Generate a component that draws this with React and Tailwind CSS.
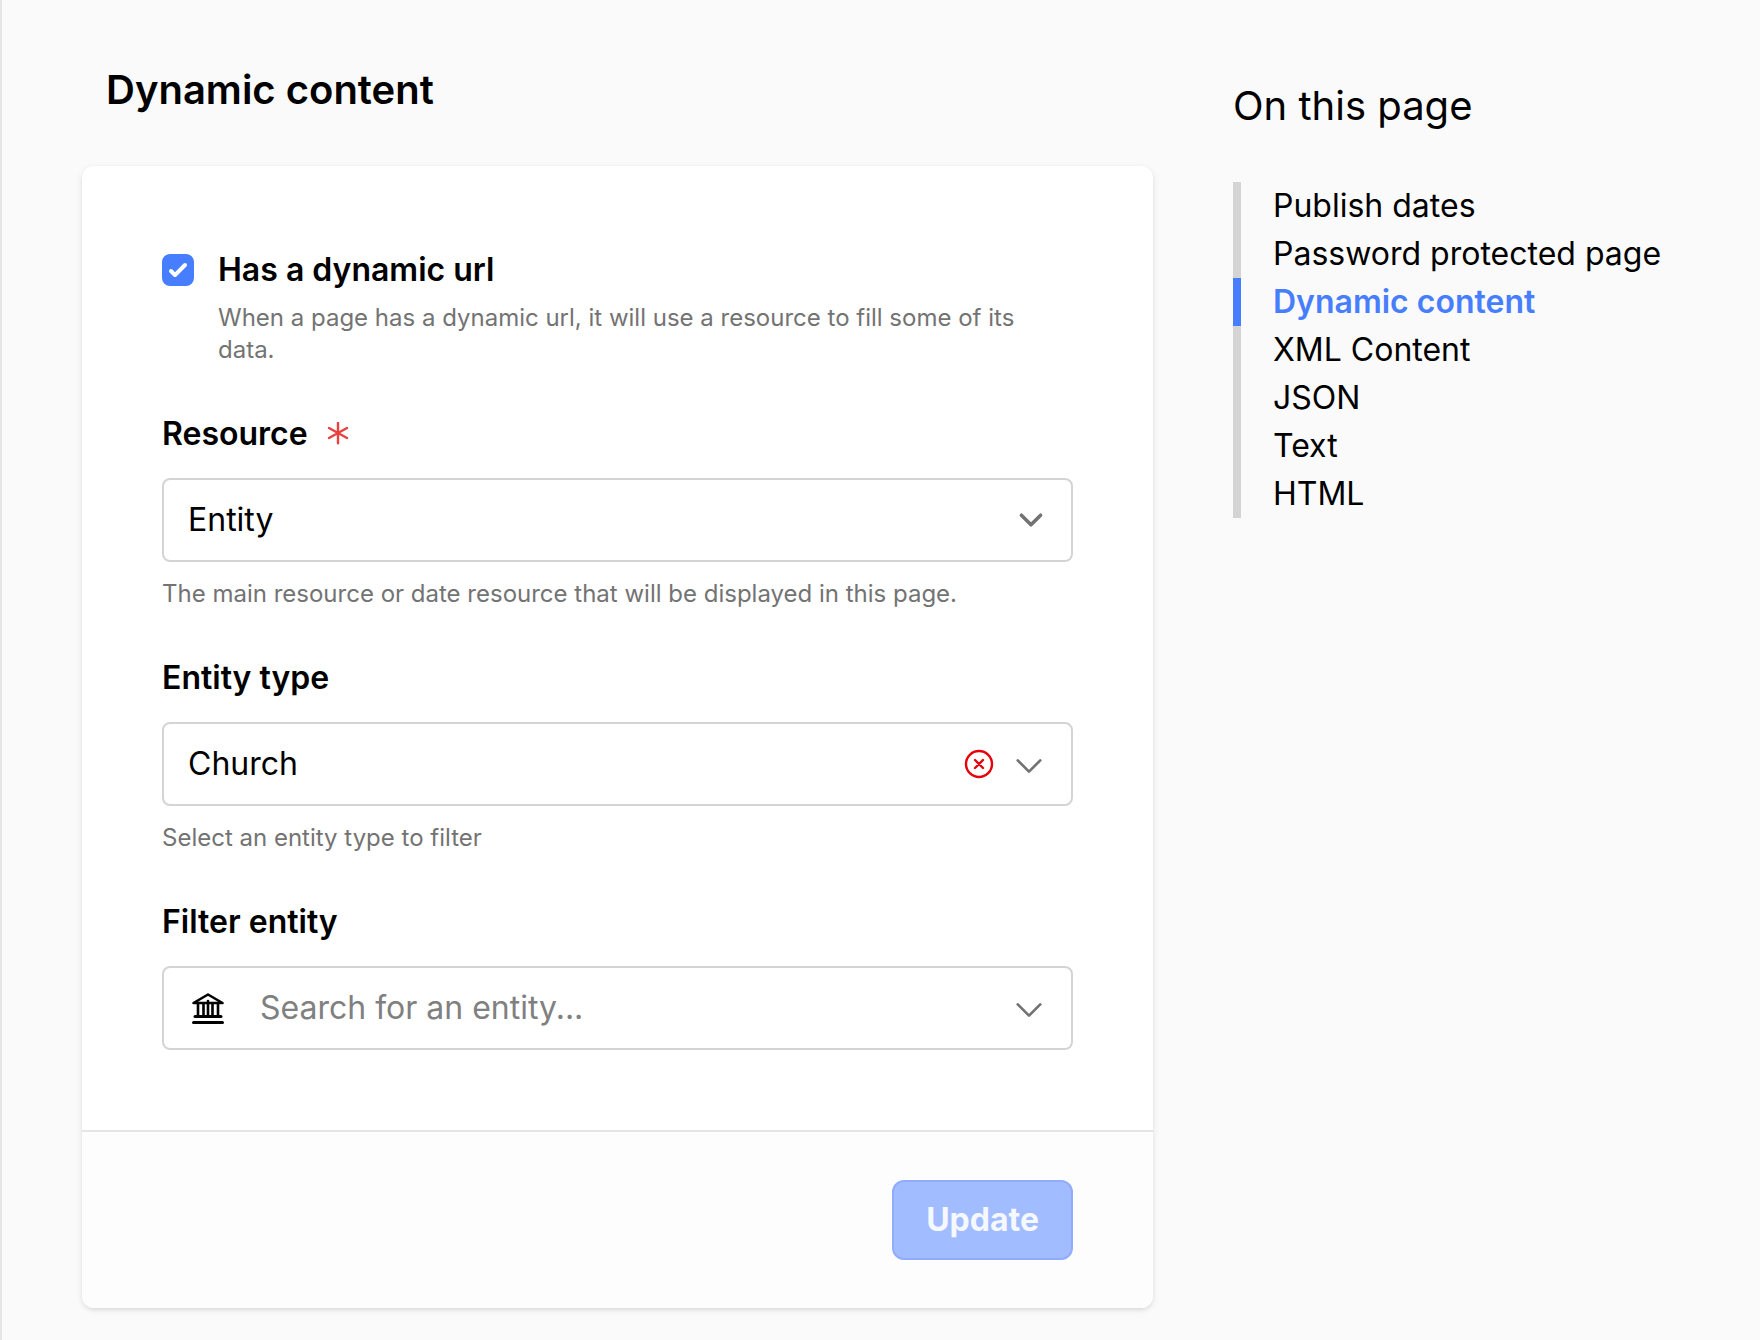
import { useState } from "react";
import { HiOutlineChevronDown } from "react-icons/hi2";

const sections = [
  "Publish dates",
  "Password protected page",
  "Dynamic content",
  "XML Content",
  "JSON",
  "Text",
  "HTML",
];

const fieldClass =
  "block h-[84px] w-full appearance-none rounded-lg border-2 border-neutral-300 bg-white text-[32px] leading-10 text-black";

const LibraryIcon = () => (
  <svg
    viewBox="0 0 40 40"
    fill="none"
    stroke="currentColor"
    strokeWidth="3"
    strokeLinecap="round"
    strokeLinejoin="round"
    className="pointer-events-none absolute inset-y-0 left-[26px] my-auto size-10"
  >
    <path d="M5.5 15L20 6.5 34.5 15z" strokeWidth="2.6" />
    <path d="M10 16v12M15.5 16v12M20 13v15M24.5 16v12M30 16v12" strokeWidth="2.6" />
    <path d="M7 28.5h26" />
    <path d="M5.5 34.5h29" />
  </svg>
);

const Field = ({ id, label, required, help, children }) => (
  <div className="mt-12">
    <div className="mb-6 flex items-center gap-[18px]">
      <label htmlFor={id} className="text-[32px] leading-10 font-semibold">
        {label}
      </label>
      {required && (
        <svg viewBox="0 0 24 24" className="size-6 text-[#e94040]" fill="none" stroke="currentColor" strokeWidth="2.4" strokeLinecap="round">
          <path d="M12 0.8v20.4M3 6l18 10M21 6L3 16" />
        </svg>
      )}
    </div>
    <div className="relative">{children}</div>
    {help && <p className="mt-4 text-2xl text-neutral-500">{help}</p>}
  </div>
);

const DynamicContentForm = () => {
  const [isDynamic, setIsDynamic] = useState(true);
  const [resource, setResource] = useState("Entity");
  const [entityType, setEntityType] = useState("Church");
  const [search, setSearch] = useState("");

  return (
    <form className="overflow-hidden rounded-xl bg-white shadow-[0_2px_6px_rgba(0,0,0,0.1),0_2px_4px_-2px_rgba(0,0,0,0.1)]">
      <div className="p-20">
        <div className="flex items-start gap-6">
          <div className="relative mt-2 size-8 shrink-0">
            <input
              id="dynamic-url"
              type="checkbox"
              checked={isDynamic}
              onChange={(e) => setIsDynamic(e.target.checked)}
              className="block size-8 appearance-none rounded-lg border-2 border-neutral-300 checked:border-[#477eff] checked:bg-[#477eff]"
            />
            {isDynamic && (
              <svg viewBox="0 0 16 16" fill="white" className="pointer-events-none absolute inset-0 size-8">
                <path d="M12.207 4.793a1 1 0 010 1.414l-5 5a1 1 0 01-1.414 0l-2-2a1 1 0 011.414-1.414L6.5 9.086l4.293-4.293a1 1 0 011.414 0z" />
              </svg>
            )}
          </div>
          <div>
            <label htmlFor="dynamic-url" className="block text-[32px] leading-12 font-semibold">
              Has a dynamic url
            </label>
            <p className="mt-2 text-2xl text-neutral-500">
              When a page has a dynamic url, it will use a resource to fill some of its data.
            </p>
          </div>
        </div>

        <Field
          id="resource"
          label="Resource"
          required
          help="The main resource or date resource that will be displayed in this page."
        >
          <select
            id="resource"
            value={resource}
            onChange={(e) => setResource(e.target.value)}
            className={`${fieldClass} pr-20 pl-6`}
          >
            <option>Entity</option>
            <option>Event</option>
          </select>
          <svg
            viewBox="0 0 20 20"
            fill="none"
            stroke="currentColor"
            strokeWidth="1.5"
            strokeLinecap="round"
            strokeLinejoin="round"
            className="pointer-events-none absolute inset-y-0 right-[18px] my-auto size-12 text-neutral-500"
          >
            <path d="M6 8l4 4 4-4" />
          </svg>
        </Field>

        <Field id="entity-type" label="Entity type" help="Select an entity type to filter">
          <select
            id="entity-type"
            value={entityType}
            onChange={(e) => setEntityType(e.target.value)}
            className={`${fieldClass} pr-32 pl-6`}
          >
            <option value=""></option>
            <option>Church</option>
          </select>
          <div className="pointer-events-none absolute inset-y-0 right-[26px] flex items-center gap-4">
            <button
              type="button"
              aria-label="Clear entity type"
              onClick={() => setEntityType("")}
              className="pointer-events-auto text-red-600"
            >
              <svg viewBox="0 0 32 32" fill="none" stroke="currentColor" strokeWidth="2.4" strokeLinecap="round" className="size-8">
                <circle cx="16" cy="16" r="13" />
                <path d="M12 12l8 8M20 12l-8 8" />
              </svg>
            </button>
            <HiOutlineChevronDown strokeWidth={1.8} className="mt-1 size-9 text-neutral-500" />
          </div>
        </Field>

        <Field id="filter-entity" label="Filter entity">
          <input
            id="filter-entity"
            type="text"
            value={search}
            onChange={(e) => setSearch(e.target.value)}
            placeholder="Search for an entity..."
            className={`${fieldClass} pr-20 pb-0.5 pl-24 placeholder:text-[#808080]`}
          />
          <LibraryIcon />
          <div className="pointer-events-none absolute inset-y-0 right-[26px] flex items-center">
            <HiOutlineChevronDown strokeWidth={1.8} className="mt-1 size-9 text-neutral-500" />
          </div>
        </Field>
      </div>

      <div className="flex justify-end border-t-2 border-neutral-200 bg-[#fdfdfd] px-20 py-12">
        <button
          type="submit"
          disabled
          className="h-20 rounded-xl border-2 border-[#91abfd] bg-[#a1bcff] px-8 text-[32px] leading-10 font-bold text-[#f6f8ff]"
        >
          Update
        </button>
      </div>
    </form>
  );
};

const TableOfContents = () => (
  <nav aria-labelledby="toc-title" className="pt-4">
    <h2 id="toc-title" className="mb-12 text-[40px] leading-14">
      On this page
    </h2>
    <ul>
      {sections.map((section) => (
        <li key={section}>
          <a
            href="#"
            className={
              section === "Dynamic content"
                ? "block border-l-8 border-[#477eff] pl-8 text-[32px] leading-12 font-semibold text-[#477eff]"
                : "block border-l-8 border-neutral-300 pl-8 text-[32px] leading-12"
            }
          >
            {section}
          </a>
        </li>
      ))}
    </ul>
  </nav>
);

const App = () => {
  return (
    <div className="min-h-screen border-l-2 border-neutral-200 bg-neutral-50 px-20 pt-[62px] pb-8 font-['Inter',sans-serif] text-black">
      <div className="grid grid-cols-[minmax(0,1fr)_447px] gap-20">
        <main>
          <h1 className="mb-12 pl-6 text-[40px] leading-14 font-semibold">Dynamic content</h1>
          <DynamicContentForm />
        </main>
        <TableOfContents />
      </div>
    </div>
  );
};

export default App;
